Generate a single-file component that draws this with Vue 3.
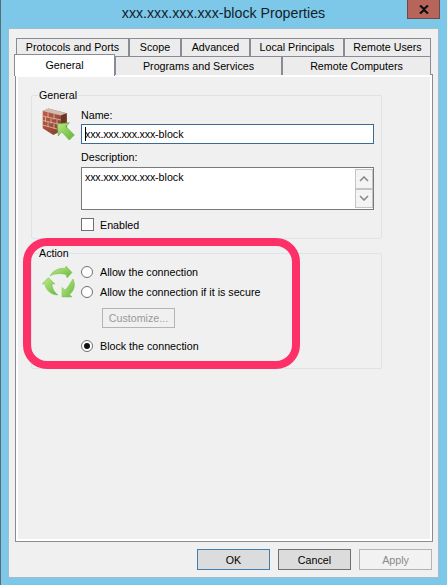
<template>
  <div class="window">
    <header class="titlebar">
      <span></span>
      <h1 class="title">xxx.xxx.xxx.xxx-block Properties</h1>
      <div class="close-wrap">
        <button class="close">
          <svg width="10" height="9" viewBox="0 0 10 9"><path d="M1 .5 5 4l4-3.500M1 8.500 5 5l4 3.500" fill="none" stroke="#111" stroke-width="2.200"/></svg>
        </button>
      </div>
    </header>

    <div class="dialog">
      <div class="tabs">
        <div class="tab-row back">
          <div v-for="t in backTabs" :key="t.label" class="tab" :style="{ width: t.width + 'px' }">{{ t.label }}</div>
        </div>
        <div class="tab-row front">
          <div
            v-for="t in frontTabs"
            :key="t.label"
            class="tab"
            :class="{ selected: t.selected }"
            :style="{ width: t.width + 'px' }"
          >{{ t.label }}</div>
        </div>
      </div>

      <div class="panel">
        <fieldset class="group general">
          <legend>General</legend>
          <div class="group-body">
            <svg class="icon" width="34" height="34" viewBox="0 0 34 34">
              <defs>
                <linearGradient id="brick" x1="0" y1="0" x2="1" y2="1">
                  <stop offset="0" stop-color="#c4604a" />
                  <stop offset="1" stop-color="#7c3a2c" />
                </linearGradient>
                <linearGradient id="green" x1="0" y1="0" x2="1" y2="1">
                  <stop offset="0" stop-color="#b8ea7e" />
                  <stop offset="1" stop-color="#5eb43a" />
                </linearGradient>
              </defs>
              <path d="M1.700 3 7.300.5 25.700 5.300v15L12.300 27 1.700 20.300z" fill="url(#brick)" />
              <path d="M1.700 3 7.300.5 25.700 5.300 20 7.500z" fill="#cdbdb2" />
              <path d="M20 7.500 25.700 5.300v15L20 23.500z" fill="#6b3527" />
              <path d="M1.700 8 20 12M1.700 12.500 20 16.500M1.700 17 16 21M7 4.500v5M13 6v5.500M4.500 9v5M10 10.500v5M16 11.500v5M7 14v5M13 15.500v5" stroke="#dcc0ac" stroke-width=".8" fill="none" />
              <path d="M16.300 16 28.300 14.700 25 18.700 33.300 27 28.300 32 20.700 23.700 17.300 28z" fill="url(#green)" stroke="#6fae48" stroke-width=".7" />
            </svg>
            <div class="fields">
              <label class="field-label first">Name:</label>
              <div class="text-input focused"><i class="caret"></i><span class="xs">xxx.xxx.xxx.xxx</span>-block</div>
              <label class="field-label second">Description:</label>
              <div class="text-area">
                <span><span class="xs">xxx.xxx.xxx.xxx</span>-block</span>
                <div class="scrollbar">
                  <div class="scroll-btn">
                    <svg width="10" height="6" viewBox="0 0 10 6"><path d="M1 5 5 1l4 4" fill="none" stroke="#8a8a8a" stroke-width="1.600"/></svg>
                  </div>
                  <div class="scroll-btn">
                    <svg width="10" height="6" viewBox="0 0 10 6"><path d="M1 1l4 4 4-4" fill="none" stroke="#8a8a8a" stroke-width="1.600"/></svg>
                  </div>
                </div>
              </div>
              <div class="check-row">
                <span class="checkbox"></span>
                <span>Enabled</span>
              </div>
            </div>
          </div>
        </fieldset>

        <fieldset class="group action">
          <legend>Action</legend>
          <div class="group-body">
            <svg class="icon arrows" width="34" height="32" viewBox="0 0 34 32">
              <defs>
                <linearGradient id="green2" x1="0" y1="0" x2="1" y2="1">
                  <stop offset="0" stop-color="#c4ec90" />
                  <stop offset="1" stop-color="#63b83c" />
                </linearGradient>
              </defs>
              <path d="M8 10C11 4 18 1.500 23 2.500L24 0l6 6.500-5 5.500-1-3.500C18 7 12 7.500 8 10z" fill="url(#green2)" stroke="#7cc052" stroke-width=".5" />
              <path d="M6.300 11.500 13 18H10C10 22 12 26 16 29 9 29 3.500 24 3 18H0z" fill="url(#green2)" stroke="#7cc052" stroke-width=".5" />
              <path d="M20 31V21.500l3 2.500C25.500 22 27.500 18 31 13c3 6 1 12-3.500 15.500L30 31z" fill="url(#green2)" stroke="#7cc052" stroke-width=".5" />
            </svg>
            <div class="options">
              <div v-for="o in options" :key="o.label" class="option-wrap">
                <div class="radio-row">
                  <span class="radio" :class="{ on: o.on }"></span>
                  <span>{{ o.label }}</span>
                </div>
                <button v-if="o.customize" class="customize">Customize...</button>
              </div>
            </div>
          </div>
        </fieldset>
      </div>

      <footer class="buttons">
        <button class="btn default">OK</button>
        <button class="btn cancel">Cancel</button>
        <button class="btn disabled">Apply</button>
      </footer>
    </div>

    <div class="highlight"></div>
  </div>
</template>

<script setup>
const backTabs = [
  { label: 'Protocols and Ports', width: 113 },
  { label: 'Scope', width: 52 },
  { label: 'Advanced', width: 69 },
  { label: 'Local Principals', width: 94 },
  { label: 'Remote Users', width: 87 }
]

const frontTabs = [
  { label: 'General', width: 101, selected: true },
  { label: 'Programs and Services', width: 167 },
  { label: 'Remote Computers', width: 149 }
]

const options = [
  { label: 'Allow the connection' },
  { label: 'Allow the connection if it is secure', customize: true },
  { label: 'Block the connection', on: true }
]
</script>

<style>
html,
body {
  margin: 0;
  background: #7dc8e8;
}
</style>

<style scoped>
.window {
  position: relative;
  width: 447px;
  height: 585px;
  box-sizing: border-box;
  overflow: hidden;
  background: #7dc8e8;
  border-left: 1px solid #5b6b76;
  font-family: "Liberation Sans", Arial, sans-serif;
  font-size: 10.7px;
  color: #000;
}

.xs {
  letter-spacing: -0.2px;
}

.titlebar {
  height: 28px;
  display: grid;
  grid-template-columns: 1fr auto 1fr;
  align-items: start;
  margin-left: -1px;
}

.title {
  margin: 3px 0 0;
  font-size: 14.2px;
  line-height: 20px;
  font-weight: 400;
  color: #10222c;
}

.close-wrap {
  display: flex;
  justify-content: flex-end;
  padding-right: 7px;
}

.close {
  width: 33px;
  height: 19px;
  padding: 0;
  display: flex;
  align-items: center;
  justify-content: center;
  background: #b7645a;
  border: 1px solid #6b4a48;
  border-top: 0;
}

.dialog {
  width: 431px;
  height: 550px;
  margin-left: 7px;
  box-sizing: border-box;
  padding: 9px 6px 0;
  background: #f0f0f0;
  border: 1px solid #a3bccb;
}

.tab-row {
  display: flex;
}

.tab {
  box-sizing: border-box;
  border: 1px solid #898c95;
  border-bottom: 0;
  background: #ececec;
  text-align: center;
  white-space: nowrap;
}

.back {
  height: 18px;
  margin-left: 1px;
}

.back .tab {
  line-height: 17px;
}

.front {
  height: 18px;
  margin-left: -1px;
}

.front .tab {
  height: 19px;
  line-height: 18px;
}

.tab.selected {
  position: relative;
  z-index: 1;
  height: 22px;
  margin-top: -2px;
  line-height: 21px;
  background: #fff;
}

.panel {
  width: 418px;
  height: 468px;
  box-sizing: border-box;
  padding: 12px 0 0 15px;
  background: #f0f0f0;
  border: 1px solid #898c95;
  outline: 2px solid #fff;
  outline-offset: -3px;
}

.group {
  width: 351px;
  box-sizing: border-box;
  margin: 0;
  padding: 0 7px 0 9px;
  min-width: 0;
  border: 1px solid #dce3e9;
  border-radius: 2px;
}

.group legend {
  height: 16px;
  line-height: 16px;
  padding: 0 1px;
  margin-left: -3px;
}

.general {
  height: 152px;
}

.action {
  height: 124px;
  margin-top: 6px;
}

.group-body {
  display: flex;
  gap: 6px;
}

.icon {
  flex: none;
  margin-top: 5px;
}

.arrows {
  margin-left: 1px;
  margin-right: -1px;
  margin-top: 5px;
}

.fields {
  flex: 1;
  min-width: 0;
}

.field-label {
  display: block;
  line-height: 15px;
}

.first {
  margin-top: 5px;
  margin-bottom: 1px;
}

.second {
  margin-top: 6px;
  margin-bottom: 2px;
}

.text-input {
  height: 20px;
  box-sizing: border-box;
  border: 1px solid #3c6a94;
  background: #fff;
  padding-left: 3px;
  line-height: 18px;
  position: relative;
}

.caret {
  position: absolute;
  left: 3px;
  top: 2px;
  width: 1px;
  height: 14px;
  background: #000;
}

.text-area {
  height: 43px;
  box-sizing: border-box;
  border: 1px solid #7a7a7a;
  background: #fff;
  padding-left: 3px;
  line-height: 18px;
  display: flex;
  justify-content: space-between;
}

.scrollbar {
  width: 18px;
  height: 39px;
  margin: 1px 0 0;
  box-sizing: border-box;
  display: flex;
  flex-direction: column;
  background: #f0f0f0;
}

.scroll-btn {
  flex: 1;
  display: flex;
  align-items: center;
  justify-content: center;
  box-sizing: border-box;
  border: 1px solid #c4c4c4;
  background: #f4f4f4;
}

.check-row {
  display: flex;
  align-items: center;
  gap: 6px;
  margin-top: 8px;
  height: 13px;
}

.checkbox {
  width: 13px;
  height: 13px;
  box-sizing: border-box;
  border: 1px solid #707070;
  background: #fff;
}

.options {
  flex: 1;
  margin-top: 1px;
}

.radio-row {
  display: flex;
  align-items: center;
  gap: 7px;
  height: 20px;
}

.radio {
  flex: none;
  width: 12px;
  height: 12px;
  box-sizing: border-box;
  border: 1px solid #707070;
  border-radius: 50%;
  background: #fff;
  display: flex;
  align-items: center;
  justify-content: center;
}

.radio.on::after {
  content: "";
  width: 6px;
  height: 6px;
  border-radius: 50%;
  background: #111;
}

.customize {
  display: block;
  width: 73px;
  height: 20px;
  margin: 6px 0 8px 21px;
  padding: 0;
  font: inherit;
  color: #9a9a9a;
  background: #f0f0f0;
  border: 1px solid #b4b4b4;
}

.buttons {
  display: flex;
  justify-content: flex-end;
  gap: 8px;
  margin-top: 7px;
  box-sizing: border-box;
  padding-right: 1px;
  width: 418px;
}

.btn {
  width: 73px;
  height: 21px;
  padding: 0;
  font: inherit;
  color: #000;
  background: #dcdcdc;
  border: 1px solid #707070;
}

.btn.default {
  border-color: #3f7fb0;
}

.btn.disabled {
  color: #8a8a8a;
  background: #f2f2f2;
  border-color: #b4b4b4;
}

/* pink annotation drawn on the screenshot */
.highlight {
  position: absolute;
  left: 22px;
  top: 238px;
  width: 277px;
  height: 131px;
  box-sizing: border-box;
  border: 8px solid #fe3068;
  border-radius: 24px;
}
</style>
